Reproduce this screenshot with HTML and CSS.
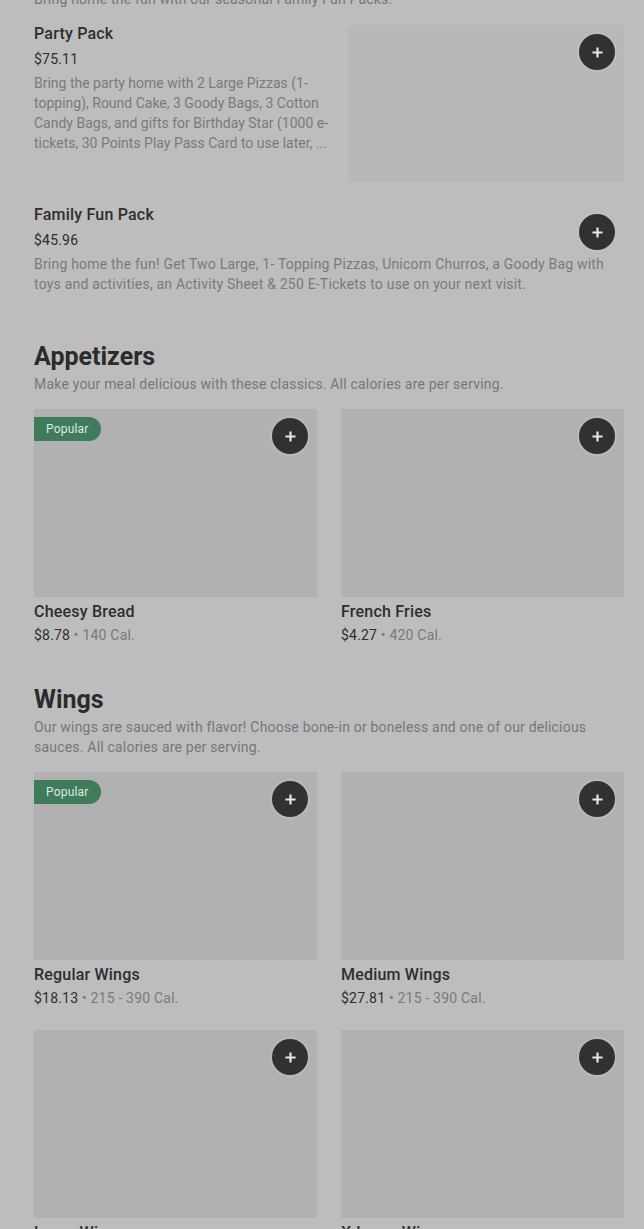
FILE: index.html
```html
<!DOCTYPE html>
<html lang="en">
<head>
    <meta charset="UTF-8">
    <meta name="viewport" content="width=device-width, initial-scale=1.0">
    <title>Menu</title>
    <link rel="stylesheet" href="styles.css">
</head>
<body>
<div class="menu">
    <section class="featured">
        <p class="section-desc intro">Bring home the fun with our seasonal Family Fun Packs.</p>

        <div class="feature">
            <div class="feature-text">
                <h3 class="item-name">Party Pack</h3>
                <p class="price">$75.11</p>
                <p class="feature-desc tight">Bring the party home with 2 Large Pizzas (1-topping), Round Cake, 3 Goody Bags, 3 Cotton Candy Bags, and gifts for Birthday Star (1000 e-tickets, 30 Points Play Pass Card to use later, ...</p>
            </div>
            <div class="feature-img">
                <button class="add" aria-label="Add Party Pack"><svg viewBox="0 0 14 14"><path d="M7 1.5v11M1.5 7h11"/></svg></button>
            </div>
        </div>

        <div class="feature no-img">
            <div class="feature-text">
                <h3 class="item-name">Family Fun Pack</h3>
                <p class="price">$45.96</p>
                <p class="feature-desc">Bring home the fun! Get Two Large, 1- Topping Pizzas, Unicorn Churros, a Goody Bag with toys and activities, an Activity Sheet &amp; 250 E-Tickets to use on your next visit.</p>
            </div>
            <button class="add" aria-label="Add Family Fun Pack"><svg viewBox="0 0 14 14"><path d="M7 1.5v11M1.5 7h11"/></svg></button>
        </div>
    </section>

    <section class="category">
        <h2>Appetizers</h2>
        <p class="section-desc">Make your meal delicious with these classics. All calories are per serving.</p>
        <div class="grid">
            <div class="card">
                <div class="card-img">
                    <span class="badge">Popular</span>
                    <button class="add" aria-label="Add Cheesy Bread"><svg viewBox="0 0 14 14"><path d="M7 1.5v11M1.5 7h11"/></svg></button>
                </div>
                <h3 class="item-name">Cheesy Bread</h3>
                <p class="meta"><span class="price">$8.78</span> • 140 Cal.</p>
            </div>
            <div class="card">
                <div class="card-img">
                    <button class="add" aria-label="Add French Fries"><svg viewBox="0 0 14 14"><path d="M7 1.5v11M1.5 7h11"/></svg></button>
                </div>
                <h3 class="item-name">French Fries</h3>
                <p class="meta"><span class="price">$4.27</span> • 420 Cal.</p>
            </div>
        </div>
    </section>

    <section class="category">
        <h2>Wings</h2>
        <p class="section-desc">Our wings are sauced with flavor! Choose bone-in or boneless and one of our delicious sauces. All calories are per serving.</p>
        <div class="grid">
            <div class="card">
                <div class="card-img">
                    <span class="badge">Popular</span>
                    <button class="add" aria-label="Add Regular Wings"><svg viewBox="0 0 14 14"><path d="M7 1.5v11M1.5 7h11"/></svg></button>
                </div>
                <h3 class="item-name">Regular Wings</h3>
                <p class="meta"><span class="price">$18.13</span> • 215 - 390 Cal.</p>
            </div>
            <div class="card">
                <div class="card-img">
                    <button class="add" aria-label="Add Medium Wings"><svg viewBox="0 0 14 14"><path d="M7 1.5v11M1.5 7h11"/></svg></button>
                </div>
                <h3 class="item-name">Medium Wings</h3>
                <p class="meta"><span class="price">$27.81</span> • 215 - 390 Cal.</p>
            </div>
            <div class="card">
                <div class="card-img">
                    <button class="add" aria-label="Add Large Wings"><svg viewBox="0 0 14 14"><path d="M7 1.5v11M1.5 7h11"/></svg></button>
                </div>
                <h3 class="item-name">Large Wings</h3>
                <p class="meta"><span class="price">$36.24</span> • 215 - 390 Cal.</p>
            </div>
            <div class="card">
                <div class="card-img">
                    <button class="add" aria-label="Add X-Large Wings"><svg viewBox="0 0 14 14"><path d="M7 1.5v11M1.5 7h11"/></svg></button>
                </div>
                <h3 class="item-name">X-Large Wings</h3>
                <p class="meta"><span class="price">$45.51</span> • 215 - 390 Cal.</p>
            </div>
        </div>
    </section>
</div>
</body>
</html>
```

FILE: styles.css
```css
body { margin: 0; background: #bdbdbd; color: #2e2e2e; font-family: Roboto, "Liberation Sans", sans-serif; letter-spacing: 0.2px; overflow: hidden; }
p, h2, h3 { margin: 0; }
.menu { padding: 0 20px 40px 34px; }

/* featured packs */
.intro { margin-top: -11px; }
.section-desc { font-size: 14px; line-height: 20px; color: #777; }
.feature { display: grid; grid-template-columns: 1fr 276px; gap: 12px; margin-top: 13px; }
.feature.no-img { display: block; position: relative; margin-top: 21px; }
.feature.no-img .add { top: 11px; right: 9px; }
.item-name { font-size: 16px; line-height: 24px; font-weight: 500; color: #2e2e2e; }
.feature .price { font-size: 14px; line-height: 20px; margin: 3px 0 4px; color: #2e2e2e; }
.feature-desc { font-size: 14px; line-height: 20px; color: #7a7a7a; }
.feature-desc.tight { letter-spacing: 0; }
.feature-img { position: relative; height: 157px; margin-top: 3px; background: #b8b8b8; }

/* categories */
.category { margin-top: 47px; }
.category + .category { margin-top: 39px; }
h2 { font-size: 25px; line-height: 32px; font-weight: 700; color: #2b2b2b; letter-spacing: 0; }
.category .section-desc { margin-top: 1px; }
.grid { display: grid; grid-template-columns: 1fr 1fr; column-gap: 24px; row-gap: 22px; margin-top: 15px; }
.card-img { position: relative; height: 188px; background: #b1b1b1; }
.card .item-name { margin-top: 3px; }
.meta { font-size: 14px; line-height: 20px; margin-top: 1px; color: #7a7a7a; }
.meta .price { color: #2e2e2e; }

.badge {
    position: absolute;
    top: 8px;
    left: 0;
    height: 24px;
    line-height: 24px;
    padding: 0 12px;
    font-size: 12px;
    color: #dfe9e3;
    background: #3e7c5b;
    border-radius: 0 12px 12px 0;
}

.add {
    position: absolute;
    top: 9px;
    right: 9px;
    width: 36px;
    height: 36px;
    padding: 0;
    border: none;
    border-radius: 50%;
    background: #313131;
    box-shadow: 0 0 0 2px rgba(200, 200, 200, 0.35);
    display: flex;
    align-items: center;
    justify-content: center;
    cursor: pointer;
}
.add svg { width: 13px; height: 13px; stroke: #e4e4e4; stroke-width: 2.4; fill: none; }
```
